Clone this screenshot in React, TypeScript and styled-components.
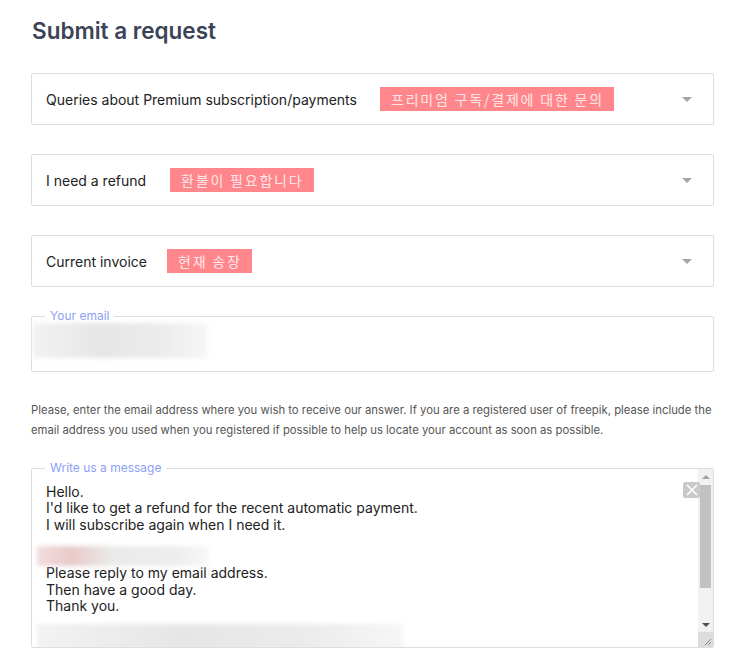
import React from 'react';
import styled, { createGlobalStyle } from 'styled-components';

const GlobalStyle = createGlobalStyle`
  html, body {
    margin: 0;
    padding: 0;
    background: #ffffff;
  }
  body {
    font-family: Inter, 'Noto Sans', sans-serif;
  }
`;

const Page = styled.div`
  width: 683px;
  padding: 17px 0 0 31px;
  display: flex;
  flex-direction: column;
`;

const Title = styled.h1`
  margin: 0 0 28px 1px;
  font-size: 22.5px;
  line-height: 28px;
  font-weight: 600;
  color: #3b4457;
`;

const SelectBox = styled.div`
  height: 50px;
  border: 1px solid #dedede;
  border-radius: 2px;
  display: flex;
  align-items: center;
  padding: 0 21px 0 14px;
  margin-bottom: 29px;
`;

const SelectLabel = styled.span`
  font-size: 14px;
  color: #222;
`;

const Badge = styled.span<{ gap: number }>`
  margin-left: ${({ gap }) => gap}px;
  height: 24px;
  line-height: 24px;
  padding: 0 10px 0 11px;
  background: #ff878c;
  color: #ffe6e8;
  font-family: 'Noto Sans CJK KR', sans-serif;
  font-size: 14px;
  letter-spacing: 1.8px;
`;

const Caret = styled.span`
  margin-left: auto;
  width: 0;
  height: 0;
  border-left: 5px solid transparent;
  border-right: 5px solid transparent;
  border-top: 5px solid #a5a5a5;
`;

const Field = styled.div<{ h: number }>`
  position: relative;
  height: ${({ h }) => h}px;
  border: 1px solid #dedede;
  border-radius: 2px;
  display: flex;
`;

const Legend = styled.span`
  position: absolute;
  top: -8px;
  left: 13px;
  padding: 0 5px;
  background: #fff;
  font-size: 12px;
  line-height: 14px;
  color: #8d9ff3;
`;

const Blur = styled.div<{ w: number; h: number; pink?: boolean }>`
  width: ${({ w }) => w}px;
  height: ${({ h }) => h}px;
  background: ${({ pink }) =>
    pink
      ? 'linear-gradient(90deg, #f0dede 0%, #e9caca 20%, #ebebeb 45%, #ededed 80%, #f8f8f8 100%)'
      : 'linear-gradient(90deg, #f2f2f2 0%, #e6e6e6 40%, #ececec 75%, #f6f6f6 100%)'};
  filter: blur(2px);
`;

const EmailBlur = styled.div`
  padding: 6px 0 0 1px;
`;

const Help = styled.p`
  margin: 28px 0 28px 0;
  font-family: Inter, sans-serif;
  font-size: 11.3px;
  line-height: 20px;
  color: #555;
`;

const TextCol = styled.div`
  flex: 1;
  padding: 15px 0 0 14px;
  font-size: 14px;
  line-height: 16.3px;
  color: #222;
  overflow: hidden;
`;

const Line = styled.div`
  height: 16.3px;
  white-space: pre;
`;

const BlurRow = styled.div<{ h: number; pt: number }>`
  height: ${({ h }) => h}px;
  padding-top: ${({ pt }) => pt}px;
  margin-left: -9px;
  box-sizing: border-box;
`;

const Scrollbar = styled.div`
  width: 15px;
  background: #f1f1f1;
  display: flex;
  flex-direction: column;
  align-items: center;
`;

const Arrow = styled.div<{ up?: boolean }>`
  height: 15px;
  display: flex;
  align-items: center;
  justify-content: center;
  &::after {
    content: '';
    border-left: 4px solid transparent;
    border-right: 4px solid transparent;
    ${({ up }) => (up ? 'border-bottom: 4px solid #a3a3a3;' : 'border-top: 4px solid #505050;')}
  }
`;

const Thumb = styled.div`
  width: 11px;
  height: 103px;
  margin-top: 1px;
  background: #c1c1c1;
`;

const Spacer = styled.div`
  flex: 1;
`;

const Grip = styled.div`
  width: 15px;
  height: 15px;
  background: #dcdcdc;
  display: flex;
`;

const CloseBtn = styled.div`
  position: absolute;
  top: 13px;
  right: 13px;
  width: 17px;
  height: 16px;
  border-radius: 2px;
  background: #c9c9c9;
  display: flex;
  align-items: center;
  justify-content: center;
`;

const requests = [
  { label: 'Queries about Premium subscription/payments', ko: '프리미엄 구독/결제에 대한 문의', gap: 23 },
  { label: 'I need a refund', ko: '환불이 필요합니다', gap: 24 },
  { label: 'Current invoice', ko: '현재 송장', gap: 20 },
];

const App: React.FC = () => {
  return (
    <>
      <GlobalStyle />
      <Page>
        <Title>Submit a request</Title>

        {requests.map((r) => (
          <SelectBox key={r.label}>
            <SelectLabel>{r.label}</SelectLabel>
            <Badge gap={r.gap}>{r.ko}</Badge>
            <Caret />
          </SelectBox>
        ))}

        <Field h={54}>
          <Legend>Your email</Legend>
          <EmailBlur>
            <Blur w={174} h={35} />
          </EmailBlur>
        </Field>

        <Help>
          Please, enter the email address where you wish to receive our answer. If you are a registered user of freepik, please include the
          email address you used when you registered if possible to help us locate your account as soon as possible.
        </Help>

        <Field h={178}>
          <Legend>Write us a message</Legend>
          <TextCol>
            <Line>Hello.</Line>
            <Line>I'd like to get a refund for the recent automatic payment.</Line>
            <Line>I will subscribe again when I need it.</Line>
            <BlurRow h={32.6} pt={13}>
              <Blur w={172} h={20} pink />
            </BlurRow>
            <Line>Please reply to my email address.</Line>
            <Line>Then have a good day.</Line>
            <Line>Thank you.</Line>
            <BlurRow h={40} pt={10}>
              <Blur w={366} h={26} />
            </BlurRow>
          </TextCol>
          <Scrollbar>
            <Arrow up />
            <Thumb />
            <Spacer />
            <Arrow />
            <Grip>
              <svg width="15" height="15" viewBox="0 0 15 15">
                <path d="M13 7 L7 13 M13 10 L10 13" stroke="#8a8a8a" strokeWidth="1" />
              </svg>
            </Grip>
          </Scrollbar>
          <CloseBtn>
            <svg width="12" height="12" viewBox="0 0 12 12">
              <path d="M1 1 L11 11 M11 1 L1 11" stroke="#fff" strokeWidth="1.6" />
            </svg>
          </CloseBtn>
        </Field>
      </Page>
    </>
  );
};

export default App;
